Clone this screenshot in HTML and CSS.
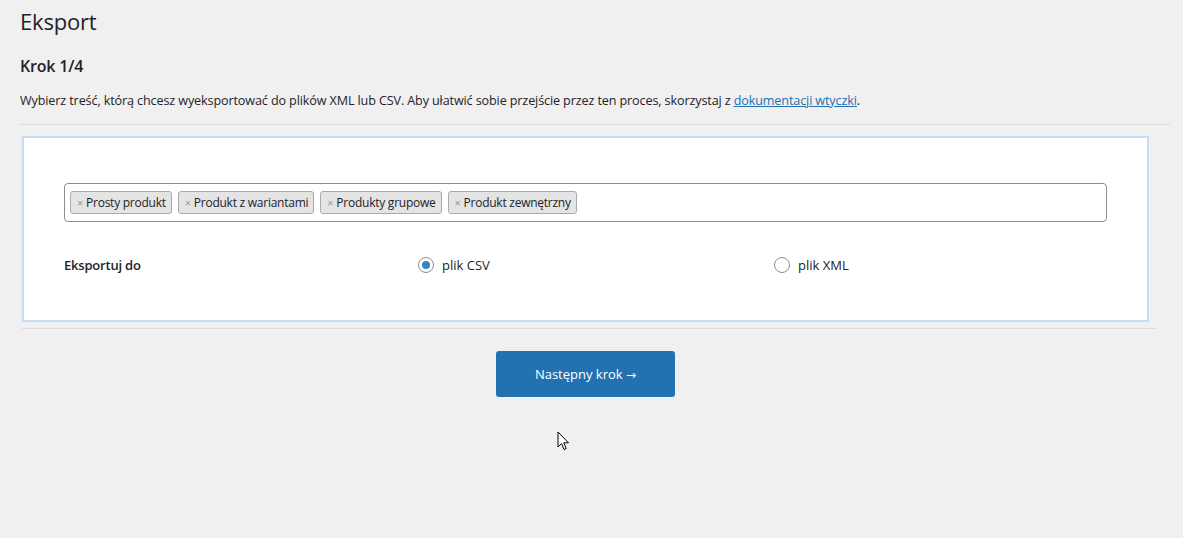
FILE: index.html
```html
<!DOCTYPE html>
<html lang="pl">
<head>
<meta charset="utf-8">
<title>Eksport</title>
<link rel="stylesheet" href="styles.css">
</head>
<body>
<div class="wrap">
  <h1 class="title">Eksport</h1>
  <h2 class="step">Krok 1/4</h2>
  <p class="desc">Wybierz treść, którą chcesz wyeksportować do plików XML lub CSV. Aby ułatwić sobie przejście przez ten proces, skorzystaj z <a href="#">dokumentacji wtyczki</a>.</p>
  <div class="rule"></div>
  <div class="panel">
    <div class="select">
      <span class="tag"><span class="x">×</span>Prosty produkt</span>
      <span class="tag"><span class="x">×</span>Produkt z wariantami</span>
      <span class="tag"><span class="x">×</span>Produkty grupowe</span>
      <span class="tag"><span class="x">×</span>Produkt zewnętrzny</span>
    </div>
    <div class="row">
      <div class="label">Eksportuj do</div>
      <label class="radio"><span class="dot checked"></span>plik CSV</label>
      <label class="radio"><span class="dot"></span>plik XML</label>
    </div>
  </div>
  <div class="rule rule-bottom"></div>
  <div class="actions">
    <button class="btn">Następny krok <span class="arrow">→</span></button>
  </div>
</div>
<svg class="cursor" width="13" height="20" viewBox="0 0 13 20"><path d="M1 1 L1 16 L4.5 12.5 L7 18.5 L9.2 17.6 L6.8 11.8 L11.5 11.8 Z" fill="#fff" stroke="#000" stroke-width="1" stroke-linejoin="miter"/></svg>
</body>
</html>
```
FILE: styles.css
```css
html, body {
  margin: 0;
  padding: 0;
  background: #f0f0f1;
}
body {
  font-family: "Open Sans", "Noto Sans", sans-serif;
  color: #1d2327;
  font-size: 13px;
  position: relative;
  min-height: 538px;
}
.wrap {
  padding: 0 13px 0 20px;
}
.title {
  font-size: 22px;
  font-weight: 400;
  margin: 0;
  padding-top: 6px;
  line-height: 30px;
  letter-spacing: -0.2px;
}
.step {
  font-size: 16px;
  font-weight: 600;
  margin: 19px 0 0;
  line-height: 22px;
  letter-spacing: -0.2px;
}
.desc {
  margin: 15px 0 0;
  font-size: 12.6px;
  line-height: 18px;
  letter-spacing: -0.12px;
}
.desc a {
  color: #2271b1;
}
.rule {
  height: 1px;
  background: #dcdcde;
  margin-top: 14px;
}
.panel {
  margin: 11px 21px 0 2px;
  background: #fff;
  border: 2px solid #c5dcf5;
  height: 186px;
  box-sizing: border-box;
  padding: 45px 40px 0 40px;
}
.select {
  border: 1px solid #8c8f94;
  border-radius: 4px;
  height: 39px;
  box-sizing: border-box;
  display: flex;
  align-items: center;
  gap: 6px;
  padding: 0 5px;
}
.tag {
  display: inline-flex;
  align-items: center;
  height: 23px;
  box-sizing: border-box;
  border: 1px solid #a7aaad;
  border-radius: 3px;
  background: #e4e4e4;
  font-size: 12px;
  padding: 0 5px 0 6px;
  letter-spacing: -0.25px;
  color: #1d2327;
}
.x {
  color: #999;
  font-size: 11px;
  margin-right: 3px;
}
.row {
  display: grid;
  grid-template-columns: 354px 356px 1fr;
  align-items: center;
  margin-top: 34px;
  height: 16px;
}
.label {
  font-weight: 600;
  font-size: 13px;
  letter-spacing: -0.2px;
}
.radio {
  display: flex;
  align-items: center;
  gap: 8px;
  font-size: 13px;
}
.dot {
  width: 16px;
  height: 16px;
  box-sizing: border-box;
  border: 1px solid #8c8f94;
  border-radius: 50%;
  background: #fff;
  display: flex;
  align-items: center;
  justify-content: center;
}
.dot.checked::after {
  content: "";
  width: 8px;
  height: 8px;
  border-radius: 50%;
  background: #3582c4;
}
.rule-bottom {
  margin: 6px 13px 0 2px;
}
.actions {
  display: flex;
  justify-content: center;
  margin-top: 22px;
  padding-right: 19px;
}
.btn {
  width: 179px;
  height: 46px;
  background: #2271b1;
  color: #fff;
  border: none;
  border-radius: 3px;
  font-family: inherit;
  font-size: 13px;
}
.arrow {
  font-family: "DejaVu Sans", sans-serif;
  font-size: 12px;
}
.cursor {
  position: absolute;
  left: 557px;
  top: 431px;
}
```
